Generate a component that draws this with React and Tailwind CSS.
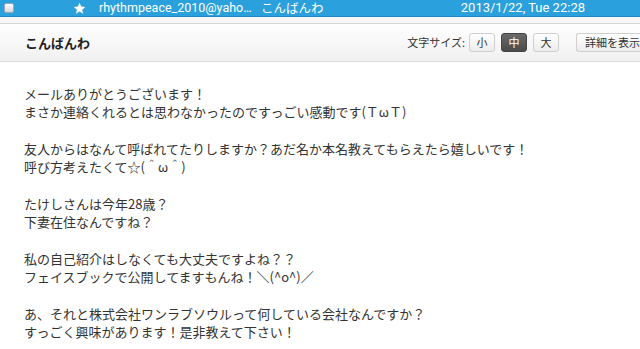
import React from 'react';

const lines = [
  ['メールありがとうございます！', 'まさか連絡くれるとは思わなかったのですっごい感動です(ＴωＴ)'],
  ['友人からはなんて呼ばれてたりしますか？あだ名か本名教えてもらえたら嬉しいです！', '呼び方考えたくて☆(＾ω＾)'],
  ['たけしさんは今年28歳？', '下妻在住なんですね？'],
  ['私の自己紹介はしなくても大丈夫ですよね？？', 'フェイスブックで公開してますもんね！＼(^o^)／'],
  ['あ、それと株式会社ワンラブソウルって何している会社なんですか？', 'すっごく興味があります！是非教えて下さい！'],
];

const SizeButton = ({ label, active }) => (
  <div
    className={`w-[26px] h-[19px] flex items-center justify-center rounded-[3px] border text-[11px] ${
      active
        ? 'bg-gradient-to-b from-[#6a6a6a] to-[#4a4a4a] border-[#444] text-white'
        : 'bg-gradient-to-b from-white to-[#ececec] border-[#cfcfcf] text-[#333]'
    }`}
  >
    {label}
  </div>
);

export default function App() {
  return (
    <div
      className="w-[640px] h-[349px] overflow-hidden bg-white"
      style={{ fontFamily: '"Noto Sans CJK JP", "Liberation Sans", sans-serif' }}
    >
      {/* Top mail row */}
      <div className="h-[17px] bg-[#2aa0dc] border-b border-[#1f86c0] flex items-center text-white text-[12.5px] leading-[14px]">
        <div className="ml-[4px] w-[10px] h-[10px] rounded-[2px] bg-gradient-to-b from-white to-[#d8d8d8] border border-[#9ab]" />
        <svg className="ml-[59px]" width="13" height="13" viewBox="0 0 24 24" fill="white">
          <path d="M12 1.5l3.2 7 7.6.7-5.8 5 1.8 7.4L12 17.7l-6.6 3.9 1.8-7.4-5.8-5 7.6-.7z" />
        </svg>
        <span className="ml-[13px] w-[160px] whitespace-nowrap overflow-hidden" style={{ fontFamily: '"Roboto", "Noto Sans CJK JP", sans-serif' }}>rhythmpeace_2010@yaho…</span>
        <span className="ml-[2px] whitespace-nowrap">こんばんわ</span>
        <span className="ml-auto mr-[55px] text-[13px] whitespace-nowrap" style={{ fontFamily: '"Roboto", sans-serif' }}>2013/1/22, Tue 22:28</span>
      </div>
      <div className="h-[7px] bg-[#f7f7f7] border-b border-[#d6d6d6]" />

      {/* Header */}
      <div className="h-[38px] bg-gradient-to-b from-white to-[#f0f0f0] border-b border-[#dadada] flex items-center">
        <div className="ml-[25px] text-[13px] font-bold text-[#222]">こんばんわ</div>
        <div className="ml-auto -mr-[16px] flex items-center text-[11px] text-[#333]">
          <span className="mr-[4px]">文字サイズ:</span>
          <div className="flex gap-[6px]">
            <SizeButton label="小" />
            <SizeButton label="中" active />
            <SizeButton label="大" />
          </div>
          <div className="ml-[17px] h-[19px] w-[80px] flex items-center pl-[8px] rounded-l-[3px] border border-r-0 border-[#cfcfcf] bg-gradient-to-b from-white to-[#ececec] whitespace-nowrap">
            詳細を表示
          </div>
        </div>
      </div>

      {/* Body */}
      <div className="pl-[24px] pt-[23px] text-[13px] leading-[18.3px] text-[#333] flex flex-col gap-[18.3px]">
        {lines.map((para, i) => (
          <div key={i}>
            {para.map((l, j) => (
              <div key={j} className="whitespace-nowrap">{l}</div>
            ))}
          </div>
        ))}
      </div>
    </div>
  );
}
